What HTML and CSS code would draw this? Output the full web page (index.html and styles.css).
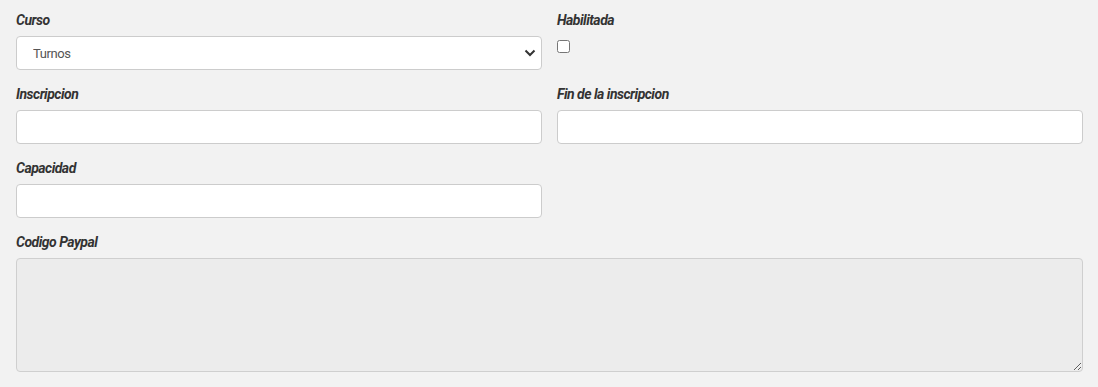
FILE: index.html
```html
<!DOCTYPE html>
<html lang="es">
<head>
    <meta charset="UTF-8">
    <title>Turnos</title>
    <link rel="stylesheet" href="styles.css">
</head>
<body>
    <form class="form">
        <div class="row">
            <div class="field">
                <label class="label">Curso</label>
                <div class="select-wrap">
                    <select class="control">
                        <option>Turnos</option>
                    </select>
                    <svg class="chevron" width="12" height="8" viewBox="0 0 12 8"><path d="M1.5 1.5 L6 6 L10.5 1.5" fill="none" stroke="#333" stroke-width="2"/></svg>
                </div>
            </div>
            <div class="field">
                <label class="label">Habilitada</label>
                <input type="checkbox" class="check">
            </div>
        </div>
        <div class="row">
            <div class="field">
                <label class="label">Inscripcion</label>
                <input type="text" class="control">
            </div>
            <div class="field">
                <label class="label">Fin de la inscripcion</label>
                <input type="text" class="control">
            </div>
        </div>
        <div class="row">
            <div class="field">
                <label class="label">Capacidad</label>
                <input type="text" class="control">
            </div>
            <div class="field"></div>
        </div>
        <div class="field">
            <label class="label">Codigo Paypal</label>
            <textarea class="control area" disabled></textarea>
        </div>
    </form>
</body>
</html>
```

FILE: styles.css
```css
* {
    margin: 0;
    padding: 0;
    box-sizing: border-box;
}

body {
    background-color: #f2f2f2;
    font-family: "Roboto", "Liberation Sans", sans-serif;
    color: #333;
}

.form {
    padding: 10px 15px 0 16px;
}

.row {
    display: grid;
    grid-template-columns: 1fr 1fr;
    column-gap: 15px;
}

.field {
    display: flex;
    flex-direction: column;
    align-items: flex-start;
    margin-bottom: 14px;
}

.label {
    font-size: 14px;
    font-weight: bold;
    font-style: italic;
    letter-spacing: -0.5px;
    line-height: 20px;
    margin-bottom: 6px;
    color: #333;
}

.control {
    width: 100%;
    height: 34px;
    background: #fff;
    border: 1px solid #ccc;
    border-radius: 4px;
    font-family: inherit;
    font-size: 13px;
    letter-spacing: -0.4px;
    color: #555;
    padding: 0 16px;
    outline: none;
}

.select-wrap {
    position: relative;
    width: 100%;
}

select.control {
    appearance: none;
    -webkit-appearance: none;
}

.chevron {
    position: absolute;
    right: 6px;
    top: 13px;
    pointer-events: none;
}

.check {
    width: 13px;
    height: 13px;
    margin: 4px 0 0 0;
}

.area {
    height: 114px;
    background: #ececec;
    resize: vertical;
    border-color: #cfcfcf;
}
```
